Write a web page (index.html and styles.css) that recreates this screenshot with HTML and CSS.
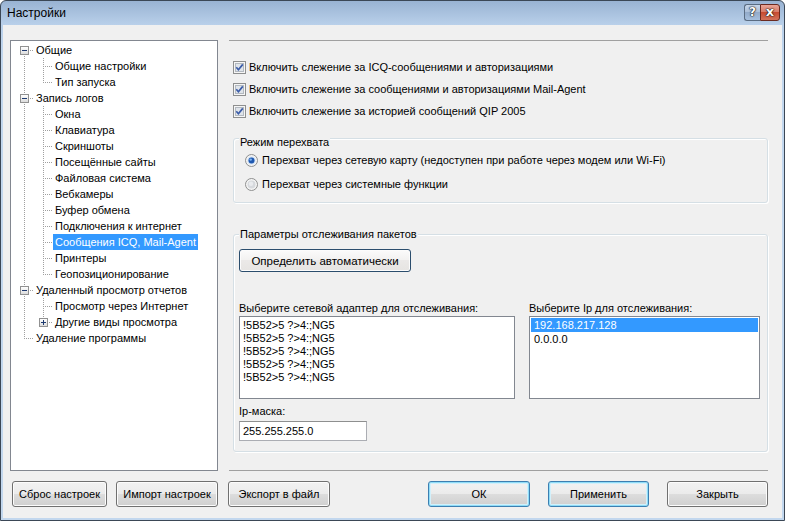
FILE: index.html
```html
<!DOCTYPE html>
<html lang="ru">
<head>
    <meta charset="UTF-8">
    <title>Настройки</title>
    <link rel="stylesheet" href="styles.css">
</head>
<body>
<div class="window">
    <div class="titlebar">
        <div class="caption">Настройки</div>
        <div class="caption-btns">
            <div class="cbtn help">?</div>
            <div class="cbtn close">x</div>
        </div>
    </div>
    <div class="client">
        <div class="main">
            <div class="tree">
                <div class="row"><span class="g f"><i class="box minus"></i></span><span class="lbl">Общие</span></div>
                <div class="row"><span class="g v"></span><span class="g t"></span><span class="lbl">Общие настройки</span></div>
                <div class="row"><span class="g v"></span><span class="g l"></span><span class="lbl">Тип запуска</span></div>
                <div class="row"><span class="g t"><i class="box minus"></i></span><span class="lbl">Запись логов</span></div>
                <div class="row"><span class="g v"></span><span class="g t"></span><span class="lbl">Окна</span></div>
                <div class="row"><span class="g v"></span><span class="g t"></span><span class="lbl">Клавиатура</span></div>
                <div class="row"><span class="g v"></span><span class="g t"></span><span class="lbl">Скриншоты</span></div>
                <div class="row"><span class="g v"></span><span class="g t"></span><span class="lbl">Посещённые сайты</span></div>
                <div class="row"><span class="g v"></span><span class="g t"></span><span class="lbl">Файловая система</span></div>
                <div class="row"><span class="g v"></span><span class="g t"></span><span class="lbl">Вебкамеры</span></div>
                <div class="row"><span class="g v"></span><span class="g t"></span><span class="lbl">Буфер обмена</span></div>
                <div class="row"><span class="g v"></span><span class="g t"></span><span class="lbl">Подключения к интернет</span></div>
                <div class="row"><span class="g v"></span><span class="g t"></span><span class="lbl selected">Сообщения ICQ, Mail-Agent</span></div>
                <div class="row"><span class="g v"></span><span class="g t"></span><span class="lbl">Принтеры</span></div>
                <div class="row"><span class="g v"></span><span class="g l"></span><span class="lbl">Геопозиционирование</span></div>
                <div class="row"><span class="g t"><i class="box minus"></i></span><span class="lbl">Удаленный просмотр отчетов</span></div>
                <div class="row"><span class="g v"></span><span class="g t"></span><span class="lbl">Просмотр через Интернет</span></div>
                <div class="row"><span class="g v"></span><span class="g l"><i class="box plus"></i></span><span class="lbl">Другие виды просмотра</span></div>
                <div class="row"><span class="g l"></span><span class="lbl">Удаление программы</span></div>
            </div>

            <div class="pane">
                <div class="checks">
                    <label class="check"><svg class="cb" width="13" height="13" viewBox="0 0 13 13"><rect x=".5" y=".5" width="12" height="12" fill="#f6f6f6" stroke="#8e8f8f"/><rect x="2.5" y="2.5" width="8" height="8" fill="#dfe4ea" stroke="#b3b9c0"/><path d="M3.3 6.3l2.1 2.4L9.8 3.4" stroke="#3b5ca8" stroke-width="1.7" fill="none"/></svg>Включить слежение за ICQ-сообщениями и авторизациями</label>
                    <label class="check"><svg class="cb" width="13" height="13" viewBox="0 0 13 13"><rect x=".5" y=".5" width="12" height="12" fill="#f6f6f6" stroke="#8e8f8f"/><rect x="2.5" y="2.5" width="8" height="8" fill="#dfe4ea" stroke="#b3b9c0"/><path d="M3.3 6.3l2.1 2.4L9.8 3.4" stroke="#3b5ca8" stroke-width="1.7" fill="none"/></svg>Включить слежение за сообщениями и авторизациями Mail-Agent</label>
                    <label class="check"><svg class="cb" width="13" height="13" viewBox="0 0 13 13"><rect x=".5" y=".5" width="12" height="12" fill="#f6f6f6" stroke="#8e8f8f"/><rect x="2.5" y="2.5" width="8" height="8" fill="#dfe4ea" stroke="#b3b9c0"/><path d="M3.3 6.3l2.1 2.4L9.8 3.4" stroke="#3b5ca8" stroke-width="1.7" fill="none"/></svg>Включить слежение за историей сообщений QIP 2005</label>
                </div>

                <div class="group mode">
                    <div class="group-title">Режим перехвата</div>
                    <label class="radio"><svg class="rb" width="13" height="13" viewBox="0 0 13 13"><circle cx="6.5" cy="6.5" r="6" fill="#f4f4f4" stroke="#8e8f8f"/><circle cx="6.5" cy="6.5" r="4" fill="#cfe0f4"/><circle cx="6.5" cy="6.5" r="3" fill="#1f58b0"/><circle cx="5.7" cy="5.6" r="1.2" fill="#7fb4f0"/></svg>Перехват через сетевую карту (недоступен при работе через модем или Wi-Fi)</label>
                    <label class="radio"><svg class="rb" width="13" height="13" viewBox="0 0 13 13"><circle cx="6.5" cy="6.5" r="6" fill="#f4f4f4" stroke="#8e8f8f"/><circle cx="6.5" cy="6.5" r="4" fill="#d6d9dd"/><circle cx="6" cy="5.8" r="2.2" fill="#e9ebee"/></svg>Перехват через системные функции</label>
                </div>

                <div class="group packets">
                    <div class="group-title">Параметры отслеживания пакетов</div>
                    <button class="btn auto">Определить автоматически</button>
                    <div class="lists">
                        <div class="list-col adapters">
                            <div class="field-label">Выберите сетевой адаптер для отслеживания:</div>
                            <div class="listbox">
                                <div class="item">!5B52&gt;5 ?&gt;4:;NG5</div>
                                <div class="item">!5B52&gt;5 ?&gt;4:;NG5</div>
                                <div class="item">!5B52&gt;5 ?&gt;4:;NG5</div>
                                <div class="item">!5B52&gt;5 ?&gt;4:;NG5</div>
                                <div class="item">!5B52&gt;5 ?&gt;4:;NG5</div>
                            </div>
                        </div>
                        <div class="list-col ips">
                            <div class="field-label">Выберите Ip для отслеживания:</div>
                            <div class="listbox">
                                <div class="item active">192.168.217.128</div>
                                <div class="item">0.0.0.0</div>
                            </div>
                        </div>
                    </div>
                    <div class="field-label mask-label">Ip-маска:</div>
                    <div class="textbox">255.255.255.0</div>
                </div>
            </div>
        </div>

        <div class="footer">
            <button class="btn reset">Сброс настроек</button>
            <button class="btn import">Импорт настроек</button>
            <button class="btn export">Экспорт в файл</button>
            <div class="spacer"></div>
            <button class="btn focus ok">ОК</button>
            <button class="btn focus apply">Применить</button>
            <button class="btn close-btn">Закрыть</button>
        </div>
    </div>
</div>
</body>
</html>
```

FILE: styles.css
```css
body { margin: 0; font-family: "Liberation Sans", Arial, sans-serif; font-size: 11px; color: #000; background: #fff; }

.window { width: 785px; height: 521px; box-sizing: border-box; display: flex; flex-direction: column; border: 1px solid #3b4756; border-radius: 6px 6px 0 0; background: linear-gradient(#99b3d3, #b9d0ea 24px, #c2d7ee 60px, #c2d7ee); overflow: hidden; }

/* title bar */
.titlebar { height: 24px; flex: none; display: flex; align-items: flex-start; padding: 0 4px 0 6px; }
.caption { font-size: 12px; line-height: 24px; color: #000; }
.caption-btns { margin-left: auto; display: flex; margin-top: 3px; }
.cbtn { height: 17px; box-sizing: border-box; color: #fff; font-family: "DejaVu Sans", sans-serif; font-weight: bold; text-align: center; line-height: 14px; text-shadow: 0 0 1px #000, 0 0 1px #000, 0 0 2px #333; }
.help { width: 16px; font-size: 12px; border: 1px solid #5a6c82; border-right: none; border-radius: 3px 0 0 3px; background: linear-gradient(#c8d7ea, #a9bdd7 50%, #93abca 50%, #a6c0de); }
.close { width: 20px; font-size: 13px; border: 1px solid #6b2a20; border-radius: 0 3px 3px 0; background: linear-gradient(#e9a597, #d77865 50%, #c74b31 50%, #d2735c); }

/* client area */
.client { flex: 1; margin: 0 2px 2px 2px; background: #f0f0f0; padding: 15px 14px 0 7px; display: flex; flex-direction: column; }
.main { display: flex; height: 431px; flex: none; }

/* tree */
.tree { width: 208px; flex: none; box-sizing: border-box; border: 1px solid #828790; background: #fff; padding: 1px 0 0 4px; }
.row { display: flex; height: 16px; white-space: nowrap; }
.g { width: 19px; flex: none; position: relative; }
.v { background: repeating-linear-gradient(#a0a0a0 0 1px, transparent 1px 2px) 9px 0 / 1px 100% no-repeat; }
.t { background: repeating-linear-gradient(#a0a0a0 0 1px, transparent 1px 2px) 9px 0 / 1px 100% no-repeat,
                 repeating-linear-gradient(to right, #a0a0a0 0 1px, transparent 1px 2px) 11px 8px / 8px 1px no-repeat; }
.l { background: repeating-linear-gradient(#a0a0a0 0 1px, transparent 1px 2px) 9px 0 / 1px 9px no-repeat,
                 repeating-linear-gradient(to right, #a0a0a0 0 1px, transparent 1px 2px) 11px 8px / 8px 1px no-repeat; }
.f { background: repeating-linear-gradient(#a0a0a0 0 1px, transparent 1px 2px) 9px 8px / 1px 8px no-repeat,
                 repeating-linear-gradient(to right, #a0a0a0 0 1px, transparent 1px 2px) 11px 8px / 8px 1px no-repeat; }
.box { position: absolute; left: 5px; top: 4px; width: 9px; height: 9px; box-sizing: border-box; border: 1px solid #919191; background: linear-gradient(#fff, #dcdcdc); }
.box::after { content: ""; position: absolute; left: 1px; top: 3px; width: 5px; height: 1px; background: #1e3a70; }
.box.plus::before { content: ""; position: absolute; left: 3px; top: 1px; width: 1px; height: 5px; background: #1e3a70; }
.lbl { line-height: 16px; padding: 0 2px; }
.selected { background: #3399ff; color: #fff; }

/* right pane */
.pane { flex: 1; margin-left: 11px; border-top: 1px solid #a0a0a0; border-bottom: 1px solid #a0a0a0; padding-left: 4px; }
.checks { margin-top: 15px; }
.check { display: flex; align-items: center; height: 22px; }
.cb { margin-right: 3px; flex: none; }

.group { border: 1px solid #d5dfe5; border-radius: 3px; box-shadow: inset 1px 1px 0 #fff, 1px 1px 0 #fff; }
.group-title { margin-top: -7px; height: 13px; line-height: 13px; width: fit-content; background: #f0f0f0; padding: 0 1px; }
.mode { margin-top: 16px; padding: 4px 0 6px 11px; }
.mode .group-title { margin-left: -6px; margin-bottom: -1px; }
.radio { display: flex; align-items: center; height: 24px; }
.rb { margin-right: 4px; flex: none; }

.packets { margin-top: 31px; padding: 0 0 10px 5px; }

.btn { font-family: "Liberation Sans", Arial, sans-serif; font-size: 11px; color: #000; height: 26px; box-sizing: border-box; border: 1px solid #707070; border-radius: 3px; background: linear-gradient(#f2f2f2, #ebebeb 50%, #dddddd 50%, #cfcfcf); box-shadow: inset 0 0 0 1px #fcfcfc; padding: 0; }
.btn.auto { display: block; width: 172px; height: 23px; margin-top: 8px; font-size: 11.5px; border-color: #2b4d6d; background: linear-gradient(#fbfbfb, #f2f1f0 50%, #ebe9e8 50%, #e6e4e2); }
.btn.focus { border-color: #3c7fb1; box-shadow: inset 0 0 0 1px #8fdcf7, inset 0 0 0 2px #d2f0fb; }

.lists { display: flex; margin-top: 30px; }
.list-col.adapters { width: 276px; }
.list-col.ips { width: 231px; margin-left: 14px; }
.field-label { height: 13px; line-height: 13px; margin-bottom: 1px; }
.listbox { height: 83px; box-sizing: border-box; border: 1px solid #828790; background: #fff; }
.adapters .listbox { padding: 2px 3px; }
.adapters .item { height: 13px; line-height: 13px; }
.ips .listbox { padding: 1px; }
.ips .item { height: 14px; line-height: 14px; padding: 0 3px; }
.item.active { background: #3399ff; color: #fff; }
.mask-label { margin-top: 6px; margin-bottom: 3px; }
.textbox { width: 128px; height: 20px; box-sizing: border-box; border: 1px solid #abadb3; border-top-color: #8e8f8f; background: #fff; line-height: 18px; padding-left: 3px; }

/* footer */
.footer { display: flex; margin-top: 10px; padding-left: 2px; }
.reset { width: 95px; }
.import { width: 102px; margin-left: 9px; }
.export { width: 102px; margin-left: 10px; }
.spacer { flex: 1; }
.ok { width: 102px; }
.apply { width: 101px; margin-left: 18px; }
.close-btn { width: 101px; margin-left: 18px; }
```
